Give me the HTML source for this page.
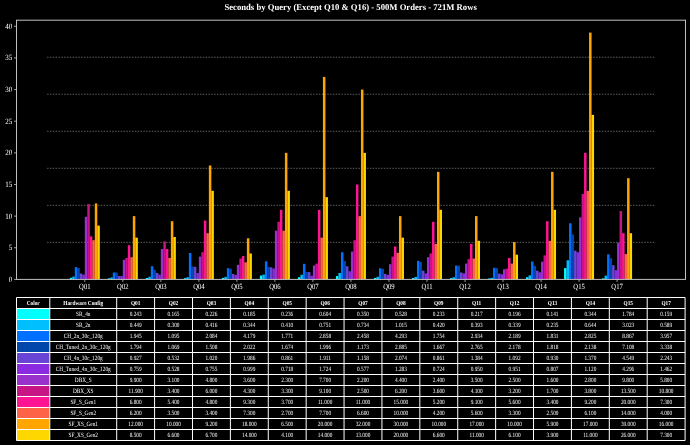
<!DOCTYPE html><html><head><meta charset="utf-8"><style>html,body{margin:0;padding:0;background:#000;width:690px;height:445px;overflow:hidden}svg{display:block;will-change:transform}text{font-family:"Liberation Serif",serif;fill:#fff;text-rendering:geometricPrecision}</style></head><body>
<svg width="690" height="445" viewBox="0 0 690 445">
<rect width="690" height="445" fill="#000"/>
<text transform="translate(350.60,9.60) scale(0.975,1)" text-anchor="middle" font-size="8.9" font-weight="bold">Seconds by Query (Except Q10 &amp; Q16) - 500M Orders - 721M Rows</text>
<line x1="47.15" y1="57.23" x2="655" y2="57.23" stroke="#808080" stroke-width="0.75" stroke-dasharray="1.45,1.38"/>
<line x1="47.15" y1="94.26" x2="655" y2="94.26" stroke="#808080" stroke-width="0.75" stroke-dasharray="1.45,1.38"/>
<line x1="47.15" y1="131.29" x2="655" y2="131.29" stroke="#808080" stroke-width="0.75" stroke-dasharray="1.45,1.38"/>
<line x1="47.15" y1="168.31" x2="655" y2="168.31" stroke="#808080" stroke-width="0.75" stroke-dasharray="1.45,1.38"/>
<line x1="47.15" y1="205.34" x2="655" y2="205.34" stroke="#808080" stroke-width="0.75" stroke-dasharray="1.45,1.38"/>
<line x1="47.15" y1="242.37" x2="655" y2="242.37" stroke="#808080" stroke-width="0.75" stroke-dasharray="1.45,1.38"/>
<rect x="69.80" y="277.86" width="2.5" height="1.54" fill="#00FFFF"/>
<rect x="72.30" y="276.56" width="2.5" height="2.84" fill="#00BFFF"/>
<rect x="74.80" y="267.09" width="2.5" height="12.31" fill="#0070FF"/>
<rect x="77.30" y="268.05" width="2.5" height="11.35" fill="#0047AB"/>
<rect x="79.80" y="273.53" width="2.5" height="5.87" fill="#6845D5"/>
<rect x="82.30" y="274.60" width="2.5" height="4.80" fill="#8A2BE2"/>
<rect x="84.80" y="216.76" width="2.5" height="62.64" fill="#9932CC"/>
<rect x="87.30" y="204.10" width="2.5" height="75.30" fill="#C71585"/>
<rect x="89.80" y="236.37" width="2.5" height="43.03" fill="#FF1493"/>
<rect x="92.30" y="240.17" width="2.5" height="39.23" fill="#FF6347"/>
<rect x="94.80" y="203.47" width="2.5" height="75.93" fill="#FFA500"/>
<rect x="97.30" y="225.62" width="2.5" height="53.78" fill="#FFD700"/>
<line x1="84.80" y1="279.4" x2="84.80" y2="281.9" stroke="#c0c0c0" stroke-width="0.8"/>
<text transform="translate(84.80,289.40) scale(0.84,1)" text-anchor="middle" font-size="7.9">Q01</text>
<rect x="107.82" y="278.36" width="2.5" height="1.04" fill="#00FFFF"/>
<rect x="110.32" y="277.50" width="2.5" height="1.90" fill="#00BFFF"/>
<rect x="112.82" y="272.47" width="2.5" height="6.93" fill="#0070FF"/>
<rect x="115.32" y="272.64" width="2.5" height="6.76" fill="#0047AB"/>
<rect x="117.82" y="276.03" width="2.5" height="3.37" fill="#6845D5"/>
<rect x="120.32" y="276.06" width="2.5" height="3.34" fill="#8A2BE2"/>
<rect x="122.82" y="259.78" width="2.5" height="19.62" fill="#9932CC"/>
<rect x="125.32" y="257.89" width="2.5" height="21.51" fill="#C71585"/>
<rect x="127.82" y="245.23" width="2.5" height="34.17" fill="#FF1493"/>
<rect x="130.32" y="257.25" width="2.5" height="22.15" fill="#FF6347"/>
<rect x="132.82" y="216.12" width="2.5" height="63.27" fill="#FFA500"/>
<rect x="135.32" y="237.64" width="2.5" height="41.76" fill="#FFD700"/>
<line x1="122.82" y1="279.4" x2="122.82" y2="281.9" stroke="#c0c0c0" stroke-width="0.8"/>
<text transform="translate(122.82,289.40) scale(0.84,1)" text-anchor="middle" font-size="7.9">Q02</text>
<rect x="145.84" y="277.97" width="2.5" height="1.43" fill="#00FFFF"/>
<rect x="148.34" y="276.77" width="2.5" height="2.63" fill="#00BFFF"/>
<rect x="150.84" y="266.21" width="2.5" height="13.19" fill="#0070FF"/>
<rect x="153.34" y="269.86" width="2.5" height="9.54" fill="#0047AB"/>
<rect x="155.84" y="272.95" width="2.5" height="6.45" fill="#6845D5"/>
<rect x="158.34" y="274.62" width="2.5" height="4.78" fill="#8A2BE2"/>
<rect x="160.84" y="249.03" width="2.5" height="30.37" fill="#9932CC"/>
<rect x="163.34" y="241.43" width="2.5" height="37.96" fill="#C71585"/>
<rect x="165.84" y="249.03" width="2.5" height="30.37" fill="#FF1493"/>
<rect x="168.34" y="257.89" width="2.5" height="21.51" fill="#FF6347"/>
<rect x="170.84" y="221.19" width="2.5" height="58.21" fill="#FFA500"/>
<rect x="173.34" y="237.01" width="2.5" height="42.39" fill="#FFD700"/>
<line x1="160.84" y1="279.4" x2="160.84" y2="281.9" stroke="#c0c0c0" stroke-width="0.8"/>
<text transform="translate(160.84,289.40) scale(0.84,1)" text-anchor="middle" font-size="7.9">Q03</text>
<rect x="183.86" y="278.23" width="2.5" height="1.17" fill="#00FFFF"/>
<rect x="186.36" y="277.22" width="2.5" height="2.18" fill="#00BFFF"/>
<rect x="188.86" y="252.96" width="2.5" height="26.44" fill="#0070FF"/>
<rect x="191.36" y="266.61" width="2.5" height="12.79" fill="#0047AB"/>
<rect x="193.86" y="266.83" width="2.5" height="12.57" fill="#6845D5"/>
<rect x="196.36" y="273.08" width="2.5" height="6.32" fill="#8A2BE2"/>
<rect x="198.86" y="256.62" width="2.5" height="22.78" fill="#9932CC"/>
<rect x="201.36" y="252.19" width="2.5" height="27.21" fill="#C71585"/>
<rect x="203.86" y="220.55" width="2.5" height="58.85" fill="#FF1493"/>
<rect x="206.36" y="233.21" width="2.5" height="46.19" fill="#FF6347"/>
<rect x="208.86" y="165.50" width="2.5" height="113.89" fill="#FFA500"/>
<rect x="211.36" y="190.81" width="2.5" height="88.58" fill="#FFD700"/>
<line x1="198.86" y1="279.4" x2="198.86" y2="281.9" stroke="#c0c0c0" stroke-width="0.8"/>
<text transform="translate(198.86,289.40) scale(0.84,1)" text-anchor="middle" font-size="7.9">Q04</text>
<rect x="221.88" y="277.91" width="2.5" height="1.49" fill="#00FFFF"/>
<rect x="224.38" y="276.81" width="2.5" height="2.59" fill="#00BFFF"/>
<rect x="226.88" y="268.19" width="2.5" height="11.21" fill="#0070FF"/>
<rect x="229.38" y="268.81" width="2.5" height="10.59" fill="#0047AB"/>
<rect x="231.88" y="273.95" width="2.5" height="5.45" fill="#6845D5"/>
<rect x="234.38" y="274.86" width="2.5" height="4.54" fill="#8A2BE2"/>
<rect x="236.88" y="264.85" width="2.5" height="14.55" fill="#9932CC"/>
<rect x="239.38" y="258.52" width="2.5" height="20.88" fill="#C71585"/>
<rect x="241.88" y="255.99" width="2.5" height="23.41" fill="#FF1493"/>
<rect x="244.38" y="262.32" width="2.5" height="17.08" fill="#FF6347"/>
<rect x="246.88" y="238.27" width="2.5" height="41.13" fill="#FFA500"/>
<rect x="249.38" y="253.46" width="2.5" height="25.94" fill="#FFD700"/>
<line x1="236.88" y1="279.4" x2="236.88" y2="281.9" stroke="#c0c0c0" stroke-width="0.8"/>
<text transform="translate(236.88,289.40) scale(0.84,1)" text-anchor="middle" font-size="7.9">Q05</text>
<rect x="259.90" y="275.58" width="2.5" height="3.82" fill="#00FFFF"/>
<rect x="262.40" y="274.65" width="2.5" height="4.75" fill="#00BFFF"/>
<rect x="264.90" y="261.32" width="2.5" height="18.08" fill="#0070FF"/>
<rect x="267.40" y="266.77" width="2.5" height="12.63" fill="#0047AB"/>
<rect x="269.90" y="267.31" width="2.5" height="12.09" fill="#6845D5"/>
<rect x="272.40" y="268.49" width="2.5" height="10.91" fill="#8A2BE2"/>
<rect x="274.90" y="230.68" width="2.5" height="48.72" fill="#9932CC"/>
<rect x="277.40" y="221.82" width="2.5" height="57.58" fill="#C71585"/>
<rect x="279.90" y="209.80" width="2.5" height="69.60" fill="#FF1493"/>
<rect x="282.40" y="230.68" width="2.5" height="48.72" fill="#FF6347"/>
<rect x="284.90" y="152.85" width="2.5" height="126.55" fill="#FFA500"/>
<rect x="287.40" y="190.81" width="2.5" height="88.58" fill="#FFD700"/>
<line x1="274.90" y1="279.4" x2="274.90" y2="281.9" stroke="#c0c0c0" stroke-width="0.8"/>
<text transform="translate(274.90,289.40) scale(0.84,1)" text-anchor="middle" font-size="7.9">Q06</text>
<rect x="297.92" y="277.19" width="2.5" height="2.21" fill="#00FFFF"/>
<rect x="300.42" y="274.76" width="2.5" height="4.64" fill="#00BFFF"/>
<rect x="302.92" y="263.85" width="2.5" height="15.55" fill="#0070FF"/>
<rect x="305.42" y="271.98" width="2.5" height="7.42" fill="#0047AB"/>
<rect x="307.92" y="272.07" width="2.5" height="7.33" fill="#6845D5"/>
<rect x="310.42" y="275.75" width="2.5" height="3.65" fill="#8A2BE2"/>
<rect x="312.92" y="265.48" width="2.5" height="13.92" fill="#9932CC"/>
<rect x="315.42" y="263.58" width="2.5" height="15.82" fill="#C71585"/>
<rect x="317.92" y="209.80" width="2.5" height="69.60" fill="#FF1493"/>
<rect x="320.42" y="237.64" width="2.5" height="41.76" fill="#FF6347"/>
<rect x="322.92" y="76.92" width="2.5" height="202.48" fill="#FFA500"/>
<rect x="325.42" y="197.14" width="2.5" height="82.26" fill="#FFD700"/>
<line x1="312.92" y1="279.4" x2="312.92" y2="281.9" stroke="#c0c0c0" stroke-width="0.8"/>
<text transform="translate(312.92,289.40) scale(0.84,1)" text-anchor="middle" font-size="7.9">Q07</text>
<rect x="335.94" y="276.06" width="2.5" height="3.34" fill="#00FFFF"/>
<rect x="338.44" y="272.98" width="2.5" height="6.42" fill="#00BFFF"/>
<rect x="340.94" y="252.24" width="2.5" height="27.16" fill="#0070FF"/>
<rect x="343.44" y="261.15" width="2.5" height="18.25" fill="#0047AB"/>
<rect x="345.94" y="266.28" width="2.5" height="13.12" fill="#6845D5"/>
<rect x="348.44" y="271.28" width="2.5" height="8.12" fill="#8A2BE2"/>
<rect x="350.94" y="251.56" width="2.5" height="27.84" fill="#9932CC"/>
<rect x="353.44" y="240.17" width="2.5" height="39.23" fill="#C71585"/>
<rect x="355.94" y="184.49" width="2.5" height="94.91" fill="#FF1493"/>
<rect x="358.44" y="216.12" width="2.5" height="63.27" fill="#FF6347"/>
<rect x="360.94" y="89.57" width="2.5" height="189.82" fill="#FFA500"/>
<rect x="363.44" y="152.85" width="2.5" height="126.55" fill="#FFD700"/>
<line x1="350.94" y1="279.4" x2="350.94" y2="281.9" stroke="#c0c0c0" stroke-width="0.8"/>
<text transform="translate(350.94,289.40) scale(0.84,1)" text-anchor="middle" font-size="7.9">Q08</text>
<rect x="373.96" y="277.93" width="2.5" height="1.47" fill="#00FFFF"/>
<rect x="376.46" y="276.74" width="2.5" height="2.66" fill="#00BFFF"/>
<rect x="378.96" y="268.30" width="2.5" height="11.10" fill="#0070FF"/>
<rect x="381.46" y="268.85" width="2.5" height="10.55" fill="#0047AB"/>
<rect x="383.96" y="273.95" width="2.5" height="5.45" fill="#6845D5"/>
<rect x="386.46" y="274.82" width="2.5" height="4.58" fill="#8A2BE2"/>
<rect x="388.96" y="264.21" width="2.5" height="15.19" fill="#9932CC"/>
<rect x="391.46" y="256.62" width="2.5" height="22.78" fill="#C71585"/>
<rect x="393.96" y="246.50" width="2.5" height="32.90" fill="#FF1493"/>
<rect x="396.46" y="252.82" width="2.5" height="26.58" fill="#FF6347"/>
<rect x="398.96" y="216.12" width="2.5" height="63.27" fill="#FFA500"/>
<rect x="401.46" y="237.64" width="2.5" height="41.76" fill="#FFD700"/>
<line x1="388.96" y1="279.4" x2="388.96" y2="281.9" stroke="#c0c0c0" stroke-width="0.8"/>
<text transform="translate(388.96,289.40) scale(0.84,1)" text-anchor="middle" font-size="7.9">Q09</text>
<rect x="411.98" y="278.03" width="2.5" height="1.37" fill="#00FFFF"/>
<rect x="414.48" y="276.91" width="2.5" height="2.49" fill="#00BFFF"/>
<rect x="416.98" y="260.84" width="2.5" height="18.56" fill="#0070FF"/>
<rect x="419.48" y="261.90" width="2.5" height="17.50" fill="#0047AB"/>
<rect x="421.98" y="270.64" width="2.5" height="8.76" fill="#6845D5"/>
<rect x="424.48" y="273.39" width="2.5" height="6.01" fill="#8A2BE2"/>
<rect x="426.98" y="257.25" width="2.5" height="22.15" fill="#9932CC"/>
<rect x="429.48" y="253.46" width="2.5" height="25.94" fill="#C71585"/>
<rect x="431.98" y="221.82" width="2.5" height="57.58" fill="#FF1493"/>
<rect x="434.48" y="243.97" width="2.5" height="35.43" fill="#FF6347"/>
<rect x="436.98" y="171.83" width="2.5" height="107.57" fill="#FFA500"/>
<rect x="439.48" y="209.80" width="2.5" height="69.60" fill="#FFD700"/>
<line x1="426.98" y1="279.4" x2="426.98" y2="281.9" stroke="#c0c0c0" stroke-width="0.8"/>
<text transform="translate(426.98,289.40) scale(0.84,1)" text-anchor="middle" font-size="7.9">Q11</text>
<rect x="450.00" y="278.16" width="2.5" height="1.24" fill="#00FFFF"/>
<rect x="452.50" y="277.25" width="2.5" height="2.15" fill="#00BFFF"/>
<rect x="455.00" y="265.55" width="2.5" height="13.85" fill="#0070FF"/>
<rect x="457.50" y="265.62" width="2.5" height="13.78" fill="#0047AB"/>
<rect x="460.00" y="272.49" width="2.5" height="6.91" fill="#6845D5"/>
<rect x="462.50" y="273.38" width="2.5" height="6.02" fill="#8A2BE2"/>
<rect x="465.00" y="263.58" width="2.5" height="15.82" fill="#9932CC"/>
<rect x="467.50" y="259.15" width="2.5" height="20.25" fill="#C71585"/>
<rect x="470.00" y="243.97" width="2.5" height="35.43" fill="#FF1493"/>
<rect x="472.50" y="258.52" width="2.5" height="20.88" fill="#FF6347"/>
<rect x="475.00" y="216.12" width="2.5" height="63.27" fill="#FFA500"/>
<rect x="477.50" y="240.80" width="2.5" height="38.60" fill="#FFD700"/>
<line x1="465.00" y1="279.4" x2="465.00" y2="281.9" stroke="#c0c0c0" stroke-width="0.8"/>
<text transform="translate(465.00,289.40) scale(0.84,1)" text-anchor="middle" font-size="7.9">Q12</text>
<rect x="488.02" y="278.51" width="2.5" height="0.89" fill="#00FFFF"/>
<rect x="490.52" y="277.91" width="2.5" height="1.49" fill="#00BFFF"/>
<rect x="493.02" y="267.81" width="2.5" height="11.59" fill="#0070FF"/>
<rect x="495.52" y="267.90" width="2.5" height="11.50" fill="#0047AB"/>
<rect x="498.02" y="273.52" width="2.5" height="5.88" fill="#6845D5"/>
<rect x="500.52" y="274.29" width="2.5" height="5.11" fill="#8A2BE2"/>
<rect x="503.02" y="269.28" width="2.5" height="10.12" fill="#9932CC"/>
<rect x="505.52" y="268.64" width="2.5" height="10.76" fill="#C71585"/>
<rect x="508.02" y="257.89" width="2.5" height="21.51" fill="#FF1493"/>
<rect x="510.52" y="263.58" width="2.5" height="15.82" fill="#FF6347"/>
<rect x="513.02" y="242.07" width="2.5" height="37.33" fill="#FFA500"/>
<rect x="515.52" y="254.72" width="2.5" height="24.68" fill="#FFD700"/>
<line x1="503.02" y1="279.4" x2="503.02" y2="281.9" stroke="#c0c0c0" stroke-width="0.8"/>
<text transform="translate(503.02,289.40) scale(0.84,1)" text-anchor="middle" font-size="7.9">Q13</text>
<rect x="526.04" y="277.22" width="2.5" height="2.18" fill="#00FFFF"/>
<rect x="528.54" y="275.33" width="2.5" height="4.07" fill="#00BFFF"/>
<rect x="531.04" y="261.52" width="2.5" height="17.88" fill="#0070FF"/>
<rect x="533.54" y="265.87" width="2.5" height="13.53" fill="#0047AB"/>
<rect x="536.04" y="270.73" width="2.5" height="8.67" fill="#6845D5"/>
<rect x="538.54" y="272.31" width="2.5" height="7.09" fill="#8A2BE2"/>
<rect x="541.04" y="261.68" width="2.5" height="17.72" fill="#9932CC"/>
<rect x="543.54" y="255.36" width="2.5" height="24.04" fill="#C71585"/>
<rect x="546.04" y="221.19" width="2.5" height="58.21" fill="#FF1493"/>
<rect x="548.54" y="240.80" width="2.5" height="38.60" fill="#FF6347"/>
<rect x="551.04" y="171.83" width="2.5" height="107.57" fill="#FFA500"/>
<rect x="553.54" y="209.80" width="2.5" height="69.60" fill="#FFD700"/>
<line x1="541.04" y1="279.4" x2="541.04" y2="281.9" stroke="#c0c0c0" stroke-width="0.8"/>
<text transform="translate(541.04,289.40) scale(0.84,1)" text-anchor="middle" font-size="7.9">Q14</text>
<rect x="564.06" y="268.11" width="2.5" height="11.29" fill="#00FFFF"/>
<rect x="566.56" y="260.27" width="2.5" height="19.13" fill="#00BFFF"/>
<rect x="569.06" y="223.29" width="2.5" height="56.11" fill="#0070FF"/>
<rect x="571.56" y="234.42" width="2.5" height="44.98" fill="#0047AB"/>
<rect x="574.06" y="250.62" width="2.5" height="28.78" fill="#6845D5"/>
<rect x="576.56" y="252.22" width="2.5" height="27.18" fill="#8A2BE2"/>
<rect x="579.06" y="217.39" width="2.5" height="62.01" fill="#9932CC"/>
<rect x="581.56" y="193.98" width="2.5" height="85.42" fill="#C71585"/>
<rect x="584.06" y="152.85" width="2.5" height="126.55" fill="#FF1493"/>
<rect x="586.56" y="190.81" width="2.5" height="88.58" fill="#FF6347"/>
<rect x="589.06" y="32.63" width="2.5" height="246.77" fill="#FFA500"/>
<rect x="591.56" y="114.88" width="2.5" height="164.51" fill="#FFD700"/>
<line x1="579.06" y1="279.4" x2="579.06" y2="281.9" stroke="#c0c0c0" stroke-width="0.8"/>
<text transform="translate(579.06,289.40) scale(0.84,1)" text-anchor="middle" font-size="7.9">Q15</text>
<rect x="602.08" y="278.39" width="2.5" height="1.01" fill="#00FFFF"/>
<rect x="604.58" y="275.67" width="2.5" height="3.73" fill="#00BFFF"/>
<rect x="607.08" y="254.36" width="2.5" height="25.04" fill="#0070FF"/>
<rect x="609.58" y="258.28" width="2.5" height="21.12" fill="#0047AB"/>
<rect x="612.08" y="265.21" width="2.5" height="14.19" fill="#6845D5"/>
<rect x="614.58" y="270.15" width="2.5" height="9.25" fill="#8A2BE2"/>
<rect x="617.08" y="242.70" width="2.5" height="36.70" fill="#9932CC"/>
<rect x="619.58" y="211.06" width="2.5" height="68.34" fill="#C71585"/>
<rect x="622.08" y="233.21" width="2.5" height="46.19" fill="#FF1493"/>
<rect x="624.58" y="254.09" width="2.5" height="25.31" fill="#FF6347"/>
<rect x="627.08" y="178.16" width="2.5" height="101.24" fill="#FFA500"/>
<rect x="629.58" y="233.21" width="2.5" height="46.19" fill="#FFD700"/>
<line x1="617.08" y1="279.4" x2="617.08" y2="281.9" stroke="#c0c0c0" stroke-width="0.8"/>
<text transform="translate(617.08,289.40) scale(0.84,1)" text-anchor="middle" font-size="7.9">Q17</text>
<rect x="16.5" y="20.2" width="669.0" height="259.2" fill="none" stroke="#c0c0c0" stroke-width="1"/>
<line x1="14.0" y1="279.40" x2="16.5" y2="279.40" stroke="#c0c0c0" stroke-width="0.8"/>
<text transform="translate(12.20,281.90) scale(0.875,1)" text-anchor="end" font-size="8">0</text>
<line x1="14.0" y1="247.76" x2="16.5" y2="247.76" stroke="#c0c0c0" stroke-width="0.8"/>
<text transform="translate(12.20,250.26) scale(0.875,1)" text-anchor="end" font-size="8">5</text>
<line x1="14.0" y1="216.12" x2="16.5" y2="216.12" stroke="#c0c0c0" stroke-width="0.8"/>
<text transform="translate(12.20,218.62) scale(0.875,1)" text-anchor="end" font-size="8">10</text>
<line x1="14.0" y1="184.49" x2="16.5" y2="184.49" stroke="#c0c0c0" stroke-width="0.8"/>
<text transform="translate(12.20,186.99) scale(0.875,1)" text-anchor="end" font-size="8">15</text>
<line x1="14.0" y1="152.85" x2="16.5" y2="152.85" stroke="#c0c0c0" stroke-width="0.8"/>
<text transform="translate(12.20,155.35) scale(0.875,1)" text-anchor="end" font-size="8">20</text>
<line x1="14.0" y1="121.21" x2="16.5" y2="121.21" stroke="#c0c0c0" stroke-width="0.8"/>
<text transform="translate(12.20,123.71) scale(0.875,1)" text-anchor="end" font-size="8">25</text>
<line x1="14.0" y1="89.57" x2="16.5" y2="89.57" stroke="#c0c0c0" stroke-width="0.8"/>
<text transform="translate(12.20,92.07) scale(0.875,1)" text-anchor="end" font-size="8">30</text>
<line x1="14.0" y1="57.94" x2="16.5" y2="57.94" stroke="#c0c0c0" stroke-width="0.8"/>
<text transform="translate(12.20,60.44) scale(0.875,1)" text-anchor="end" font-size="8">35</text>
<line x1="14.0" y1="26.30" x2="16.5" y2="26.30" stroke="#c0c0c0" stroke-width="0.8"/>
<text transform="translate(12.20,28.80) scale(0.875,1)" text-anchor="end" font-size="8">40</text>
<rect x="16.5" y="308.50" width="33.3" height="11" fill="#00FFFF"/>
<rect x="16.5" y="319.50" width="33.3" height="11" fill="#00BFFF"/>
<rect x="16.5" y="330.50" width="33.3" height="11" fill="#0070FF"/>
<rect x="16.5" y="341.50" width="33.3" height="11" fill="#0047AB"/>
<rect x="16.5" y="352.50" width="33.3" height="11" fill="#6845D5"/>
<rect x="16.5" y="363.50" width="33.3" height="11" fill="#8A2BE2"/>
<rect x="16.5" y="374.50" width="33.3" height="11" fill="#9932CC"/>
<rect x="16.5" y="385.50" width="33.3" height="11" fill="#C71585"/>
<rect x="16.5" y="396.50" width="33.3" height="11" fill="#FF1493"/>
<rect x="16.5" y="407.50" width="33.3" height="11" fill="#FF6347"/>
<rect x="16.5" y="418.50" width="33.3" height="11" fill="#FFA500"/>
<rect x="16.5" y="429.50" width="33.3" height="11" fill="#FFD700"/>
<line x1="16.5" y1="297.50" x2="685.10" y2="297.50" stroke="#fff" stroke-width="1.0"/>
<line x1="16.5" y1="308.50" x2="685.10" y2="308.50" stroke="#fff" stroke-width="1.0"/>
<line x1="16.5" y1="319.50" x2="685.10" y2="319.50" stroke="#fff" stroke-width="1.0"/>
<line x1="16.5" y1="330.50" x2="685.10" y2="330.50" stroke="#fff" stroke-width="1.0"/>
<line x1="16.5" y1="341.50" x2="685.10" y2="341.50" stroke="#fff" stroke-width="1.0"/>
<line x1="16.5" y1="352.50" x2="685.10" y2="352.50" stroke="#fff" stroke-width="1.0"/>
<line x1="16.5" y1="363.50" x2="685.10" y2="363.50" stroke="#fff" stroke-width="1.0"/>
<line x1="16.5" y1="374.50" x2="685.10" y2="374.50" stroke="#fff" stroke-width="1.0"/>
<line x1="16.5" y1="385.50" x2="685.10" y2="385.50" stroke="#fff" stroke-width="1.0"/>
<line x1="16.5" y1="396.50" x2="685.10" y2="396.50" stroke="#fff" stroke-width="1.0"/>
<line x1="16.5" y1="407.50" x2="685.10" y2="407.50" stroke="#fff" stroke-width="1.0"/>
<line x1="16.5" y1="418.50" x2="685.10" y2="418.50" stroke="#fff" stroke-width="1.0"/>
<line x1="16.5" y1="429.50" x2="685.10" y2="429.50" stroke="#fff" stroke-width="1.0"/>
<line x1="16.5" y1="440.50" x2="685.10" y2="440.50" stroke="#fff" stroke-width="1.0"/>
<line x1="16.50" y1="297.5" x2="16.50" y2="440.50" stroke="#fff" stroke-width="1.0"/>
<line x1="49.80" y1="297.5" x2="49.80" y2="440.50" stroke="#fff" stroke-width="1.0"/>
<line x1="116.70" y1="297.5" x2="116.70" y2="440.50" stroke="#fff" stroke-width="1.0"/>
<line x1="154.59" y1="297.5" x2="154.59" y2="440.50" stroke="#fff" stroke-width="1.0"/>
<line x1="192.49" y1="297.5" x2="192.49" y2="440.50" stroke="#fff" stroke-width="1.0"/>
<line x1="230.38" y1="297.5" x2="230.38" y2="440.50" stroke="#fff" stroke-width="1.0"/>
<line x1="268.27" y1="297.5" x2="268.27" y2="440.50" stroke="#fff" stroke-width="1.0"/>
<line x1="306.17" y1="297.5" x2="306.17" y2="440.50" stroke="#fff" stroke-width="1.0"/>
<line x1="344.06" y1="297.5" x2="344.06" y2="440.50" stroke="#fff" stroke-width="1.0"/>
<line x1="381.95" y1="297.5" x2="381.95" y2="440.50" stroke="#fff" stroke-width="1.0"/>
<line x1="419.84" y1="297.5" x2="419.84" y2="440.50" stroke="#fff" stroke-width="1.0"/>
<line x1="457.74" y1="297.5" x2="457.74" y2="440.50" stroke="#fff" stroke-width="1.0"/>
<line x1="495.63" y1="297.5" x2="495.63" y2="440.50" stroke="#fff" stroke-width="1.0"/>
<line x1="533.52" y1="297.5" x2="533.52" y2="440.50" stroke="#fff" stroke-width="1.0"/>
<line x1="571.42" y1="297.5" x2="571.42" y2="440.50" stroke="#fff" stroke-width="1.0"/>
<line x1="609.31" y1="297.5" x2="609.31" y2="440.50" stroke="#fff" stroke-width="1.0"/>
<line x1="647.20" y1="297.5" x2="647.20" y2="440.50" stroke="#fff" stroke-width="1.0"/>
<line x1="685.10" y1="297.5" x2="685.10" y2="440.50" stroke="#fff" stroke-width="1.0"/>
<text transform="translate(33.15,304.60) scale(0.86,1)" text-anchor="middle" font-size="6.2" font-weight="bold">Color</text>
<text transform="translate(83.25,304.60) scale(0.86,1)" text-anchor="middle" font-size="6.2" font-weight="bold">Hardware Config</text>
<text transform="translate(135.65,304.60) scale(0.86,1)" text-anchor="middle" font-size="6.2" font-weight="bold">Q01</text>
<text transform="translate(173.54,304.60) scale(0.86,1)" text-anchor="middle" font-size="6.2" font-weight="bold">Q02</text>
<text transform="translate(211.43,304.60) scale(0.86,1)" text-anchor="middle" font-size="6.2" font-weight="bold">Q03</text>
<text transform="translate(249.33,304.60) scale(0.86,1)" text-anchor="middle" font-size="6.2" font-weight="bold">Q04</text>
<text transform="translate(287.22,304.60) scale(0.86,1)" text-anchor="middle" font-size="6.2" font-weight="bold">Q05</text>
<text transform="translate(325.11,304.60) scale(0.86,1)" text-anchor="middle" font-size="6.2" font-weight="bold">Q06</text>
<text transform="translate(363.00,304.60) scale(0.86,1)" text-anchor="middle" font-size="6.2" font-weight="bold">Q07</text>
<text transform="translate(400.90,304.60) scale(0.86,1)" text-anchor="middle" font-size="6.2" font-weight="bold">Q08</text>
<text transform="translate(438.79,304.60) scale(0.86,1)" text-anchor="middle" font-size="6.2" font-weight="bold">Q09</text>
<text transform="translate(476.68,304.60) scale(0.86,1)" text-anchor="middle" font-size="6.2" font-weight="bold">Q11</text>
<text transform="translate(514.58,304.60) scale(0.86,1)" text-anchor="middle" font-size="6.2" font-weight="bold">Q12</text>
<text transform="translate(552.47,304.60) scale(0.86,1)" text-anchor="middle" font-size="6.2" font-weight="bold">Q13</text>
<text transform="translate(590.36,304.60) scale(0.86,1)" text-anchor="middle" font-size="6.2" font-weight="bold">Q14</text>
<text transform="translate(628.26,304.60) scale(0.86,1)" text-anchor="middle" font-size="6.2" font-weight="bold">Q15</text>
<text transform="translate(666.15,304.60) scale(0.86,1)" text-anchor="middle" font-size="6.2" font-weight="bold">Q17</text>
<text transform="translate(83.25,315.50) scale(0.83,1)" text-anchor="middle" font-size="6.4">SR_4n</text>
<text transform="translate(135.65,315.50) scale(0.83,1)" text-anchor="middle" font-size="6.4">0.243</text>
<text transform="translate(173.54,315.50) scale(0.83,1)" text-anchor="middle" font-size="6.4">0.165</text>
<text transform="translate(211.43,315.50) scale(0.83,1)" text-anchor="middle" font-size="6.4">0.226</text>
<text transform="translate(249.33,315.50) scale(0.83,1)" text-anchor="middle" font-size="6.4">0.185</text>
<text transform="translate(287.22,315.50) scale(0.83,1)" text-anchor="middle" font-size="6.4">0.236</text>
<text transform="translate(325.11,315.50) scale(0.83,1)" text-anchor="middle" font-size="6.4">0.604</text>
<text transform="translate(363.00,315.50) scale(0.83,1)" text-anchor="middle" font-size="6.4">0.350</text>
<text transform="translate(400.90,315.50) scale(0.83,1)" text-anchor="middle" font-size="6.4">0.528</text>
<text transform="translate(438.79,315.50) scale(0.83,1)" text-anchor="middle" font-size="6.4">0.233</text>
<text transform="translate(476.68,315.50) scale(0.83,1)" text-anchor="middle" font-size="6.4">0.217</text>
<text transform="translate(514.58,315.50) scale(0.83,1)" text-anchor="middle" font-size="6.4">0.196</text>
<text transform="translate(552.47,315.50) scale(0.83,1)" text-anchor="middle" font-size="6.4">0.141</text>
<text transform="translate(590.36,315.50) scale(0.83,1)" text-anchor="middle" font-size="6.4">0.344</text>
<text transform="translate(628.26,315.50) scale(0.83,1)" text-anchor="middle" font-size="6.4">1.784</text>
<text transform="translate(666.15,315.50) scale(0.83,1)" text-anchor="middle" font-size="6.4">0.159</text>
<text transform="translate(83.25,326.50) scale(0.83,1)" text-anchor="middle" font-size="6.4">SR_2n</text>
<text transform="translate(135.65,326.50) scale(0.83,1)" text-anchor="middle" font-size="6.4">0.449</text>
<text transform="translate(173.54,326.50) scale(0.83,1)" text-anchor="middle" font-size="6.4">0.300</text>
<text transform="translate(211.43,326.50) scale(0.83,1)" text-anchor="middle" font-size="6.4">0.416</text>
<text transform="translate(249.33,326.50) scale(0.83,1)" text-anchor="middle" font-size="6.4">0.344</text>
<text transform="translate(287.22,326.50) scale(0.83,1)" text-anchor="middle" font-size="6.4">0.410</text>
<text transform="translate(325.11,326.50) scale(0.83,1)" text-anchor="middle" font-size="6.4">0.751</text>
<text transform="translate(363.00,326.50) scale(0.83,1)" text-anchor="middle" font-size="6.4">0.734</text>
<text transform="translate(400.90,326.50) scale(0.83,1)" text-anchor="middle" font-size="6.4">1.015</text>
<text transform="translate(438.79,326.50) scale(0.83,1)" text-anchor="middle" font-size="6.4">0.420</text>
<text transform="translate(476.68,326.50) scale(0.83,1)" text-anchor="middle" font-size="6.4">0.393</text>
<text transform="translate(514.58,326.50) scale(0.83,1)" text-anchor="middle" font-size="6.4">0.339</text>
<text transform="translate(552.47,326.50) scale(0.83,1)" text-anchor="middle" font-size="6.4">0.235</text>
<text transform="translate(590.36,326.50) scale(0.83,1)" text-anchor="middle" font-size="6.4">0.644</text>
<text transform="translate(628.26,326.50) scale(0.83,1)" text-anchor="middle" font-size="6.4">3.023</text>
<text transform="translate(666.15,326.50) scale(0.83,1)" text-anchor="middle" font-size="6.4">0.589</text>
<text transform="translate(83.25,337.50) scale(0.83,1)" text-anchor="middle" font-size="6.4">CH_2n_30c_120g</text>
<text transform="translate(135.65,337.50) scale(0.83,1)" text-anchor="middle" font-size="6.4">1.945</text>
<text transform="translate(173.54,337.50) scale(0.83,1)" text-anchor="middle" font-size="6.4">1.095</text>
<text transform="translate(211.43,337.50) scale(0.83,1)" text-anchor="middle" font-size="6.4">2.084</text>
<text transform="translate(249.33,337.50) scale(0.83,1)" text-anchor="middle" font-size="6.4">4.179</text>
<text transform="translate(287.22,337.50) scale(0.83,1)" text-anchor="middle" font-size="6.4">1.771</text>
<text transform="translate(325.11,337.50) scale(0.83,1)" text-anchor="middle" font-size="6.4">2.858</text>
<text transform="translate(363.00,337.50) scale(0.83,1)" text-anchor="middle" font-size="6.4">2.458</text>
<text transform="translate(400.90,337.50) scale(0.83,1)" text-anchor="middle" font-size="6.4">4.293</text>
<text transform="translate(438.79,337.50) scale(0.83,1)" text-anchor="middle" font-size="6.4">1.754</text>
<text transform="translate(476.68,337.50) scale(0.83,1)" text-anchor="middle" font-size="6.4">2.934</text>
<text transform="translate(514.58,337.50) scale(0.83,1)" text-anchor="middle" font-size="6.4">2.189</text>
<text transform="translate(552.47,337.50) scale(0.83,1)" text-anchor="middle" font-size="6.4">1.831</text>
<text transform="translate(590.36,337.50) scale(0.83,1)" text-anchor="middle" font-size="6.4">2.825</text>
<text transform="translate(628.26,337.50) scale(0.83,1)" text-anchor="middle" font-size="6.4">8.867</text>
<text transform="translate(666.15,337.50) scale(0.83,1)" text-anchor="middle" font-size="6.4">3.957</text>
<text transform="translate(83.25,348.50) scale(0.83,1)" text-anchor="middle" font-size="6.4">CH_Tuned_2n_30c_120g</text>
<text transform="translate(135.65,348.50) scale(0.83,1)" text-anchor="middle" font-size="6.4">1.794</text>
<text transform="translate(173.54,348.50) scale(0.83,1)" text-anchor="middle" font-size="6.4">1.069</text>
<text transform="translate(211.43,348.50) scale(0.83,1)" text-anchor="middle" font-size="6.4">1.508</text>
<text transform="translate(249.33,348.50) scale(0.83,1)" text-anchor="middle" font-size="6.4">2.022</text>
<text transform="translate(287.22,348.50) scale(0.83,1)" text-anchor="middle" font-size="6.4">1.674</text>
<text transform="translate(325.11,348.50) scale(0.83,1)" text-anchor="middle" font-size="6.4">1.996</text>
<text transform="translate(363.00,348.50) scale(0.83,1)" text-anchor="middle" font-size="6.4">1.173</text>
<text transform="translate(400.90,348.50) scale(0.83,1)" text-anchor="middle" font-size="6.4">2.885</text>
<text transform="translate(438.79,348.50) scale(0.83,1)" text-anchor="middle" font-size="6.4">1.667</text>
<text transform="translate(476.68,348.50) scale(0.83,1)" text-anchor="middle" font-size="6.4">2.765</text>
<text transform="translate(514.58,348.50) scale(0.83,1)" text-anchor="middle" font-size="6.4">2.178</text>
<text transform="translate(552.47,348.50) scale(0.83,1)" text-anchor="middle" font-size="6.4">1.818</text>
<text transform="translate(590.36,348.50) scale(0.83,1)" text-anchor="middle" font-size="6.4">2.138</text>
<text transform="translate(628.26,348.50) scale(0.83,1)" text-anchor="middle" font-size="6.4">7.108</text>
<text transform="translate(666.15,348.50) scale(0.83,1)" text-anchor="middle" font-size="6.4">3.338</text>
<text transform="translate(83.25,359.50) scale(0.83,1)" text-anchor="middle" font-size="6.4">CH_4n_30c_120g</text>
<text transform="translate(135.65,359.50) scale(0.83,1)" text-anchor="middle" font-size="6.4">0.927</text>
<text transform="translate(173.54,359.50) scale(0.83,1)" text-anchor="middle" font-size="6.4">0.532</text>
<text transform="translate(211.43,359.50) scale(0.83,1)" text-anchor="middle" font-size="6.4">1.020</text>
<text transform="translate(249.33,359.50) scale(0.83,1)" text-anchor="middle" font-size="6.4">1.986</text>
<text transform="translate(287.22,359.50) scale(0.83,1)" text-anchor="middle" font-size="6.4">0.861</text>
<text transform="translate(325.11,359.50) scale(0.83,1)" text-anchor="middle" font-size="6.4">1.911</text>
<text transform="translate(363.00,359.50) scale(0.83,1)" text-anchor="middle" font-size="6.4">1.158</text>
<text transform="translate(400.90,359.50) scale(0.83,1)" text-anchor="middle" font-size="6.4">2.074</text>
<text transform="translate(438.79,359.50) scale(0.83,1)" text-anchor="middle" font-size="6.4">0.861</text>
<text transform="translate(476.68,359.50) scale(0.83,1)" text-anchor="middle" font-size="6.4">1.384</text>
<text transform="translate(514.58,359.50) scale(0.83,1)" text-anchor="middle" font-size="6.4">1.092</text>
<text transform="translate(552.47,359.50) scale(0.83,1)" text-anchor="middle" font-size="6.4">0.930</text>
<text transform="translate(590.36,359.50) scale(0.83,1)" text-anchor="middle" font-size="6.4">1.370</text>
<text transform="translate(628.26,359.50) scale(0.83,1)" text-anchor="middle" font-size="6.4">4.549</text>
<text transform="translate(666.15,359.50) scale(0.83,1)" text-anchor="middle" font-size="6.4">2.243</text>
<text transform="translate(83.25,370.50) scale(0.83,1)" text-anchor="middle" font-size="6.4">CH_Tuned_4n_30c_120g</text>
<text transform="translate(135.65,370.50) scale(0.83,1)" text-anchor="middle" font-size="6.4">0.759</text>
<text transform="translate(173.54,370.50) scale(0.83,1)" text-anchor="middle" font-size="6.4">0.528</text>
<text transform="translate(211.43,370.50) scale(0.83,1)" text-anchor="middle" font-size="6.4">0.755</text>
<text transform="translate(249.33,370.50) scale(0.83,1)" text-anchor="middle" font-size="6.4">0.999</text>
<text transform="translate(287.22,370.50) scale(0.83,1)" text-anchor="middle" font-size="6.4">0.718</text>
<text transform="translate(325.11,370.50) scale(0.83,1)" text-anchor="middle" font-size="6.4">1.724</text>
<text transform="translate(363.00,370.50) scale(0.83,1)" text-anchor="middle" font-size="6.4">0.577</text>
<text transform="translate(400.90,370.50) scale(0.83,1)" text-anchor="middle" font-size="6.4">1.283</text>
<text transform="translate(438.79,370.50) scale(0.83,1)" text-anchor="middle" font-size="6.4">0.724</text>
<text transform="translate(476.68,370.50) scale(0.83,1)" text-anchor="middle" font-size="6.4">0.950</text>
<text transform="translate(514.58,370.50) scale(0.83,1)" text-anchor="middle" font-size="6.4">0.951</text>
<text transform="translate(552.47,370.50) scale(0.83,1)" text-anchor="middle" font-size="6.4">0.807</text>
<text transform="translate(590.36,370.50) scale(0.83,1)" text-anchor="middle" font-size="6.4">1.120</text>
<text transform="translate(628.26,370.50) scale(0.83,1)" text-anchor="middle" font-size="6.4">4.296</text>
<text transform="translate(666.15,370.50) scale(0.83,1)" text-anchor="middle" font-size="6.4">1.462</text>
<text transform="translate(83.25,381.50) scale(0.83,1)" text-anchor="middle" font-size="6.4">DBX_S</text>
<text transform="translate(135.65,381.50) scale(0.83,1)" text-anchor="middle" font-size="6.4">9.900</text>
<text transform="translate(173.54,381.50) scale(0.83,1)" text-anchor="middle" font-size="6.4">3.100</text>
<text transform="translate(211.43,381.50) scale(0.83,1)" text-anchor="middle" font-size="6.4">4.800</text>
<text transform="translate(249.33,381.50) scale(0.83,1)" text-anchor="middle" font-size="6.4">3.600</text>
<text transform="translate(287.22,381.50) scale(0.83,1)" text-anchor="middle" font-size="6.4">2.300</text>
<text transform="translate(325.11,381.50) scale(0.83,1)" text-anchor="middle" font-size="6.4">7.700</text>
<text transform="translate(363.00,381.50) scale(0.83,1)" text-anchor="middle" font-size="6.4">2.200</text>
<text transform="translate(400.90,381.50) scale(0.83,1)" text-anchor="middle" font-size="6.4">4.400</text>
<text transform="translate(438.79,381.50) scale(0.83,1)" text-anchor="middle" font-size="6.4">2.400</text>
<text transform="translate(476.68,381.50) scale(0.83,1)" text-anchor="middle" font-size="6.4">3.500</text>
<text transform="translate(514.58,381.50) scale(0.83,1)" text-anchor="middle" font-size="6.4">2.500</text>
<text transform="translate(552.47,381.50) scale(0.83,1)" text-anchor="middle" font-size="6.4">1.600</text>
<text transform="translate(590.36,381.50) scale(0.83,1)" text-anchor="middle" font-size="6.4">2.800</text>
<text transform="translate(628.26,381.50) scale(0.83,1)" text-anchor="middle" font-size="6.4">9.800</text>
<text transform="translate(666.15,381.50) scale(0.83,1)" text-anchor="middle" font-size="6.4">5.800</text>
<text transform="translate(83.25,392.50) scale(0.83,1)" text-anchor="middle" font-size="6.4">DBX_XS</text>
<text transform="translate(135.65,392.50) scale(0.83,1)" text-anchor="middle" font-size="6.4">11.900</text>
<text transform="translate(173.54,392.50) scale(0.83,1)" text-anchor="middle" font-size="6.4">3.400</text>
<text transform="translate(211.43,392.50) scale(0.83,1)" text-anchor="middle" font-size="6.4">6.000</text>
<text transform="translate(249.33,392.50) scale(0.83,1)" text-anchor="middle" font-size="6.4">4.300</text>
<text transform="translate(287.22,392.50) scale(0.83,1)" text-anchor="middle" font-size="6.4">3.300</text>
<text transform="translate(325.11,392.50) scale(0.83,1)" text-anchor="middle" font-size="6.4">9.100</text>
<text transform="translate(363.00,392.50) scale(0.83,1)" text-anchor="middle" font-size="6.4">2.500</text>
<text transform="translate(400.90,392.50) scale(0.83,1)" text-anchor="middle" font-size="6.4">6.200</text>
<text transform="translate(438.79,392.50) scale(0.83,1)" text-anchor="middle" font-size="6.4">3.600</text>
<text transform="translate(476.68,392.50) scale(0.83,1)" text-anchor="middle" font-size="6.4">4.100</text>
<text transform="translate(514.58,392.50) scale(0.83,1)" text-anchor="middle" font-size="6.4">3.200</text>
<text transform="translate(552.47,392.50) scale(0.83,1)" text-anchor="middle" font-size="6.4">1.700</text>
<text transform="translate(590.36,392.50) scale(0.83,1)" text-anchor="middle" font-size="6.4">3.800</text>
<text transform="translate(628.26,392.50) scale(0.83,1)" text-anchor="middle" font-size="6.4">13.500</text>
<text transform="translate(666.15,392.50) scale(0.83,1)" text-anchor="middle" font-size="6.4">10.800</text>
<text transform="translate(83.25,403.50) scale(0.83,1)" text-anchor="middle" font-size="6.4">SF_S_Gen1</text>
<text transform="translate(135.65,403.50) scale(0.83,1)" text-anchor="middle" font-size="6.4">6.800</text>
<text transform="translate(173.54,403.50) scale(0.83,1)" text-anchor="middle" font-size="6.4">5.400</text>
<text transform="translate(211.43,403.50) scale(0.83,1)" text-anchor="middle" font-size="6.4">4.800</text>
<text transform="translate(249.33,403.50) scale(0.83,1)" text-anchor="middle" font-size="6.4">9.300</text>
<text transform="translate(287.22,403.50) scale(0.83,1)" text-anchor="middle" font-size="6.4">3.700</text>
<text transform="translate(325.11,403.50) scale(0.83,1)" text-anchor="middle" font-size="6.4">11.000</text>
<text transform="translate(363.00,403.50) scale(0.83,1)" text-anchor="middle" font-size="6.4">11.000</text>
<text transform="translate(400.90,403.50) scale(0.83,1)" text-anchor="middle" font-size="6.4">15.000</text>
<text transform="translate(438.79,403.50) scale(0.83,1)" text-anchor="middle" font-size="6.4">5.200</text>
<text transform="translate(476.68,403.50) scale(0.83,1)" text-anchor="middle" font-size="6.4">9.100</text>
<text transform="translate(514.58,403.50) scale(0.83,1)" text-anchor="middle" font-size="6.4">5.600</text>
<text transform="translate(552.47,403.50) scale(0.83,1)" text-anchor="middle" font-size="6.4">3.400</text>
<text transform="translate(590.36,403.50) scale(0.83,1)" text-anchor="middle" font-size="6.4">9.200</text>
<text transform="translate(628.26,403.50) scale(0.83,1)" text-anchor="middle" font-size="6.4">20.000</text>
<text transform="translate(666.15,403.50) scale(0.83,1)" text-anchor="middle" font-size="6.4">7.300</text>
<text transform="translate(83.25,414.50) scale(0.83,1)" text-anchor="middle" font-size="6.4">SF_S_Gen2</text>
<text transform="translate(135.65,414.50) scale(0.83,1)" text-anchor="middle" font-size="6.4">6.200</text>
<text transform="translate(173.54,414.50) scale(0.83,1)" text-anchor="middle" font-size="6.4">3.500</text>
<text transform="translate(211.43,414.50) scale(0.83,1)" text-anchor="middle" font-size="6.4">3.400</text>
<text transform="translate(249.33,414.50) scale(0.83,1)" text-anchor="middle" font-size="6.4">7.300</text>
<text transform="translate(287.22,414.50) scale(0.83,1)" text-anchor="middle" font-size="6.4">2.700</text>
<text transform="translate(325.11,414.50) scale(0.83,1)" text-anchor="middle" font-size="6.4">7.700</text>
<text transform="translate(363.00,414.50) scale(0.83,1)" text-anchor="middle" font-size="6.4">6.600</text>
<text transform="translate(400.90,414.50) scale(0.83,1)" text-anchor="middle" font-size="6.4">10.000</text>
<text transform="translate(438.79,414.50) scale(0.83,1)" text-anchor="middle" font-size="6.4">4.200</text>
<text transform="translate(476.68,414.50) scale(0.83,1)" text-anchor="middle" font-size="6.4">5.600</text>
<text transform="translate(514.58,414.50) scale(0.83,1)" text-anchor="middle" font-size="6.4">3.300</text>
<text transform="translate(552.47,414.50) scale(0.83,1)" text-anchor="middle" font-size="6.4">2.500</text>
<text transform="translate(590.36,414.50) scale(0.83,1)" text-anchor="middle" font-size="6.4">6.100</text>
<text transform="translate(628.26,414.50) scale(0.83,1)" text-anchor="middle" font-size="6.4">14.000</text>
<text transform="translate(666.15,414.50) scale(0.83,1)" text-anchor="middle" font-size="6.4">4.000</text>
<text transform="translate(83.25,425.50) scale(0.83,1)" text-anchor="middle" font-size="6.4">SF_XS_Gen1</text>
<text transform="translate(135.65,425.50) scale(0.83,1)" text-anchor="middle" font-size="6.4">12.000</text>
<text transform="translate(173.54,425.50) scale(0.83,1)" text-anchor="middle" font-size="6.4">10.000</text>
<text transform="translate(211.43,425.50) scale(0.83,1)" text-anchor="middle" font-size="6.4">9.200</text>
<text transform="translate(249.33,425.50) scale(0.83,1)" text-anchor="middle" font-size="6.4">18.000</text>
<text transform="translate(287.22,425.50) scale(0.83,1)" text-anchor="middle" font-size="6.4">6.500</text>
<text transform="translate(325.11,425.50) scale(0.83,1)" text-anchor="middle" font-size="6.4">20.000</text>
<text transform="translate(363.00,425.50) scale(0.83,1)" text-anchor="middle" font-size="6.4">32.000</text>
<text transform="translate(400.90,425.50) scale(0.83,1)" text-anchor="middle" font-size="6.4">30.000</text>
<text transform="translate(438.79,425.50) scale(0.83,1)" text-anchor="middle" font-size="6.4">10.000</text>
<text transform="translate(476.68,425.50) scale(0.83,1)" text-anchor="middle" font-size="6.4">17.000</text>
<text transform="translate(514.58,425.50) scale(0.83,1)" text-anchor="middle" font-size="6.4">10.000</text>
<text transform="translate(552.47,425.50) scale(0.83,1)" text-anchor="middle" font-size="6.4">5.900</text>
<text transform="translate(590.36,425.50) scale(0.83,1)" text-anchor="middle" font-size="6.4">17.000</text>
<text transform="translate(628.26,425.50) scale(0.83,1)" text-anchor="middle" font-size="6.4">39.000</text>
<text transform="translate(666.15,425.50) scale(0.83,1)" text-anchor="middle" font-size="6.4">16.000</text>
<text transform="translate(83.25,436.50) scale(0.83,1)" text-anchor="middle" font-size="6.4">SF_XS_Gen2</text>
<text transform="translate(135.65,436.50) scale(0.83,1)" text-anchor="middle" font-size="6.4">8.500</text>
<text transform="translate(173.54,436.50) scale(0.83,1)" text-anchor="middle" font-size="6.4">6.600</text>
<text transform="translate(211.43,436.50) scale(0.83,1)" text-anchor="middle" font-size="6.4">6.700</text>
<text transform="translate(249.33,436.50) scale(0.83,1)" text-anchor="middle" font-size="6.4">14.000</text>
<text transform="translate(287.22,436.50) scale(0.83,1)" text-anchor="middle" font-size="6.4">4.100</text>
<text transform="translate(325.11,436.50) scale(0.83,1)" text-anchor="middle" font-size="6.4">14.000</text>
<text transform="translate(363.00,436.50) scale(0.83,1)" text-anchor="middle" font-size="6.4">13.000</text>
<text transform="translate(400.90,436.50) scale(0.83,1)" text-anchor="middle" font-size="6.4">20.000</text>
<text transform="translate(438.79,436.50) scale(0.83,1)" text-anchor="middle" font-size="6.4">6.600</text>
<text transform="translate(476.68,436.50) scale(0.83,1)" text-anchor="middle" font-size="6.4">11.000</text>
<text transform="translate(514.58,436.50) scale(0.83,1)" text-anchor="middle" font-size="6.4">6.100</text>
<text transform="translate(552.47,436.50) scale(0.83,1)" text-anchor="middle" font-size="6.4">3.900</text>
<text transform="translate(590.36,436.50) scale(0.83,1)" text-anchor="middle" font-size="6.4">11.000</text>
<text transform="translate(628.26,436.50) scale(0.83,1)" text-anchor="middle" font-size="6.4">26.000</text>
<text transform="translate(666.15,436.50) scale(0.83,1)" text-anchor="middle" font-size="6.4">7.300</text>
</svg></body></html>
